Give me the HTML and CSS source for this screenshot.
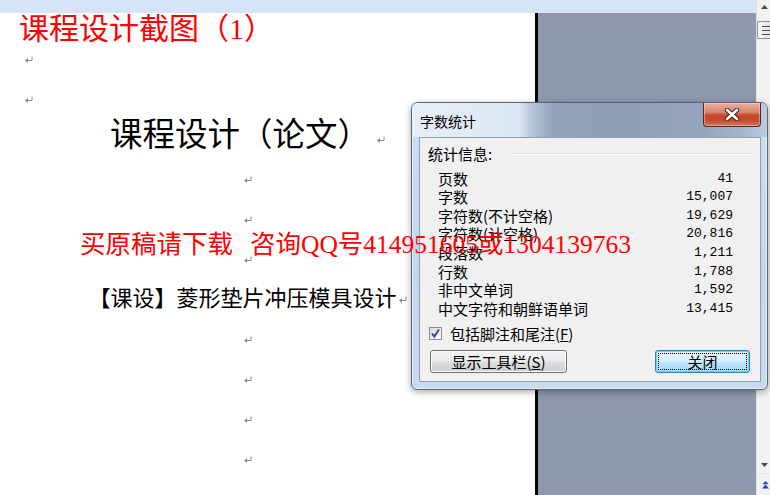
FILE: index.html
```html
<!DOCTYPE html>
<html lang="zh-CN">
<head>
<meta charset="utf-8">
<title>字数统计</title>
<link rel="stylesheet" href="styles.css">
</head>
<body>
<svg class="defs" aria-hidden="true">
  <symbol id="pm" viewBox="0 0 8 7">
    <path d="M7 0.5V4.5H2.5" fill="none" stroke="#8a8a8a" stroke-width="1"/>
    <path d="M0 4.5L3 2V7Z" fill="#8a8a8a"/>
  </symbol>
</svg>
<div class="screen">
  <div class="workspace">
    <div class="band"></div>
    <div class="area">
      <div class="page">
        <div class="doc-title">课程设计截图<span class="paren">（1）</span></div>
        <p class="line left"><svg class="pm"><use href="#pm"/></svg></p>
        <p class="line left"><svg class="pm"><use href="#pm"/></svg></p>
        <p class="line center"><span class="heading-text">课程设计（论文）</span><svg class="pm"><use href="#pm"/></svg></p>
        <p class="line center"><svg class="pm"><use href="#pm"/></svg></p>
        <p class="line center"><svg class="pm"><use href="#pm"/></svg></p>
        <p class="line center"><svg class="pm"><use href="#pm"/></svg></p>
        <p class="line center"><span class="sub-text">【课设】菱形垫片冲压模具设计</span><svg class="pm"><use href="#pm"/></svg></p>
        <p class="line center"><svg class="pm"><use href="#pm"/></svg></p>
        <p class="line center"><svg class="pm"><use href="#pm"/></svg></p>
        <p class="line center"><svg class="pm"><use href="#pm"/></svg></p>
        <p class="line center"><svg class="pm"><use href="#pm"/></svg></p>
      </div>
      <div class="outside"></div>
    </div>
  </div>
  <div class="scrollbar">
    <div class="sb-up"><svg width="7" height="4" viewBox="0 0 7 4"><path d="M3.5 0L7 4H0Z" fill="#4a4a4a"/></svg></div>
    <div class="sb-thumb"><i></i><i></i><i></i></div>
    <div class="sb-track"></div>
    <div class="sb-down"><svg width="7" height="4" viewBox="0 0 7 4"><path d="M0 0H7L3.5 4Z" fill="#4a4a4a"/></svg></div>
    <div class="sb-prev"><svg width="7" height="8" viewBox="0 0 7 8"><path d="M3.5 0L6.5 3.2H0.5Z M3.5 3.6L7 7.6H0Z" fill="#1f3fe0"/></svg></div>
  </div>

  <div class="dialog">
    <div class="titlebar">
      <span class="title">字数统计</span>
      <div class="close">
        <svg width="16" height="13" viewBox="0 0 16 13"><path d="M3 2L13 11M13 2L3 11" stroke="#4a1d14" stroke-width="4.6" stroke-linecap="round"/><path d="M3 2L13 11M13 2L3 11" stroke="#fff" stroke-width="2.6" stroke-linecap="round"/></svg>
      </div>
    </div>
    <div class="client">
      <div class="group-head"><span>统计信息:</span><span class="rule"></span></div>
      <div class="rows">
        <div class="row"><span>页数</span><span class="value">41</span></div>
        <div class="row"><span>字数</span><span class="value">15,007</span></div>
        <div class="row"><span>字符数(不计空格)</span><span class="value">19,629</span></div>
        <div class="row"><span>字符数(计空格)</span><span class="value">20,816</span></div>
        <div class="row"><span>段落数</span><span class="value">1,211</span></div>
        <div class="row"><span>行数</span><span class="value">1,788</span></div>
        <div class="row"><span>非中文单词</span><span class="value">1,592</span></div>
        <div class="row"><span>中文字符和朝鲜语单词</span><span class="value">13,415</span></div>
      </div>
      <div class="check-row">
        <span class="checkbox"><svg width="11" height="11" viewBox="0 0 11 11"><path d="M2 5.5L4.3 8.5L9 1.5" fill="none" stroke="#2d4a9a" stroke-width="2"/></svg></span>
        <span>包括脚注和尾注(<u>F</u>)</span>
      </div>
      <div class="buttons">
        <div class="btn">显示工具栏(<u>S</u>)</div>
        <div class="btn default"><span class="focus">关闭</span></div>
      </div>
    </div>
  </div>

  <div class="watermark"><span>买原稿请下载</span><span class="wm-2">咨询QQ号414951605或1304139763</span></div>
</div>
</body>
</html>
```

FILE: styles.css
```css
html, body {
  margin: 0;
  padding: 0;
}
body {
  width: 770px;
  height: 495px;
  overflow: hidden;
  background: #fff;
  font-family: "Noto Sans CJK SC", sans-serif;
  color: #000;
}
.defs {
  position: absolute;
  width: 0;
  height: 0;
  overflow: hidden;
}
.screen {
  position: relative;
  display: flex;
  width: 770px;
  height: 495px;
}
.workspace {
  width: 756px;
  flex: none;
  display: flex;
  flex-direction: column;
}
.band {
  height: 13px;
  flex: none;
  background: #d5e4f6;
}
.area {
  flex: 1;
  display: flex;
  min-height: 0;
}
.page {
  width: 535px;
  flex: none;
  box-sizing: border-box;
  padding-left: 22px;
  padding-right: 62px;
  background: #fff;
}
.outside {
  flex: 1;
  background: #9098ad;
  border-left: 3px solid #050505;
}
.doc-title {
  height: 26px;
  line-height: 26px;
  font-size: 30px;
  color: #f00;
  margin-left: -3px;
  white-space: nowrap;
}
.doc-title .paren {
  font-family: "Liberation Serif", "Noto Sans CJK SC", serif;
}
.line {
  height: 40px;
  margin: 0;
  display: flex;
  align-items: center;
}
.line.left {
  padding-left: 3px;
}
.line.center {
  justify-content: center;
}
.pm {
  width: 8px;
  height: 7px;
  flex: none;
}
.heading-text {
  font-size: 32.5px;
  line-height: 32px;
  margin-bottom: 14px;
  margin-right: 7px;
  white-space: nowrap;
}
.sub-text {
  font-size: 22px;
  line-height: 22px;
  margin-bottom: 6px;
  margin-right: 2px;
  white-space: nowrap;
}

/* scrollbar */
.scrollbar {
  width: 14px;
  flex: none;
  box-sizing: border-box;
  background: #f2f2f2;
  border-left: 1px solid #e2e2e2;
  display: flex;
  flex-direction: column;
}
.sb-up {
  height: 14px;
  display: flex;
  align-items: center;
  justify-content: center;
  padding-left: 2px;
}
.sb-thumb {
  margin-top: 7px;
  height: 18px;
  box-sizing: border-box;
  border: 1px solid #8f8f8f;
  border-right: none;
  border-radius: 2px 0 0 2px;
  background: linear-gradient(90deg, #f7f7f7, #e5e5e5);
  display: flex;
  flex-direction: column;
  align-items: flex-end;
  justify-content: center;
  gap: 3px;
}
.sb-thumb i {
  display: block;
  width: 8px;
  height: 1px;
  background: #4c4c4c;
}
.sb-track {
  flex: 1;
}
.sb-down {
  height: 16px;
  display: flex;
  align-items: center;
  justify-content: center;
  padding-left: 2px;
}
.sb-prev {
  height: 22px;
  display: flex;
  align-items: center;
  justify-content: center;
  padding-left: 3px;
  border-top: 1px solid #e6e6e6;
  box-sizing: border-box;
}

/* dialog */
.dialog {
  position: absolute;
  left: 411px;
  top: 102px;
  width: 357px;
  height: 288px;
  box-sizing: border-box;
  border: 1px solid #56677c;
  border-radius: 7px 7px 6px 6px;
  background: linear-gradient(180deg, #cfdff1 0%, #c2d6ed 60%, #c9dbef 100%);
  box-shadow: inset 0 0 0 1px rgba(255, 255, 255, 0.55), 0 2px 7px rgba(0, 0, 0, 0.35);
  display: flex;
  flex-direction: column;
  z-index: 1;
}
.titlebar {
  height: 34px;
  flex: none;
  display: flex;
  justify-content: space-between;
  align-items: flex-start;
  padding-left: 8px;
  border-radius: 6px 6px 0 0;
  background: linear-gradient(90deg, #e7eef7 0%, #dce7f3 30%, #b4c2d5 34%, #93a2ba 40%, #8f9fb8 60%, #95a5bd 82%, #a4b5cb 93%, #bccde2 100%);
}
.title {
  font-size: 14px;
  line-height: 14px;
  margin-top: 11px;
  color: #000;
}
.close {
  width: 58px;
  height: 24px;
  margin-right: 6px;
  box-sizing: border-box;
  border: 1px solid #5b2418;
  border-top: none;
  border-radius: 0 0 4px 4px;
  background: linear-gradient(180deg, #e9b1a2 0%, #d98671 40%, #c7472b 52%, #c24a2f 75%, #d2785c 100%);
  box-shadow: inset 0 0 0 1px rgba(255, 220, 210, 0.45);
  display: flex;
  align-items: center;
  justify-content: center;
}
.client {
  flex: 1;
  margin: 0 6px 7px 7px;
  border: 1px solid #8ea0b6;
  background: #f0f0f0;
  font-size: 15px;
}
.group-head {
  display: flex;
  align-items: center;
  height: 18.6px;
  line-height: 18.6px;
  margin-top: 7px;
  padding-left: 8px;
  padding-right: 8px;
}
.group-head .rule {
  flex: 1;
  height: 0;
  margin-left: 18px;
  border-top: 1px solid #d6dde3;
  border-bottom: 1px solid #fff;
}
.rows {
  margin-top: 6px;
  padding: 0 27px 0 18px;
}
.row {
  display: flex;
  justify-content: space-between;
  height: 18.6px;
  line-height: 18.6px;
  white-space: nowrap;
}
.value {
  font-family: "Liberation Mono", monospace;
  font-size: 13px;
}
.check-row {
  display: flex;
  align-items: center;
  height: 18.6px;
  margin-top: 5.4px;
  padding-left: 9px;
}
.checkbox {
  width: 13px;
  height: 13px;
  box-sizing: border-box;
  border: 1px solid #8e8f8f;
  background: linear-gradient(135deg, #dcdcdc, #fbfbfb);
  margin-right: 8px;
  display: flex;
  align-items: center;
  justify-content: center;
}
.checkbox svg {
  flex: none;
}
.buttons {
  display: flex;
  justify-content: space-between;
  margin-top: 7.7px;
  padding: 0 10px;
}
.btn {
  width: 137px;
  height: 23px;
  box-sizing: border-box;
  border: 1px solid #707070;
  border-radius: 3px;
  background: linear-gradient(180deg, #f2f2f2 0%, #ebebeb 48%, #dddddd 52%, #cfcfcf 100%);
  box-shadow: inset 0 0 0 1px #fbfbfb;
  display: flex;
  align-items: center;
  justify-content: center;
  line-height: 18px;
  white-space: nowrap;
}
.btn.default {
  width: 95px;
  border-color: #3c7fb1;
  box-shadow: inset 0 0 0 1px #56d8fa;
  background: linear-gradient(180deg, #eaf6fd 0%, #d9f0fc 48%, #bee6fd 52%, #a7d9f5 100%);
  align-items: stretch;
  padding: 2px;
}
.focus {
  flex: 1;
  border: 1px dotted #000;
  display: flex;
  align-items: center;
  justify-content: center;
  line-height: 15px;
}

/* watermark */
.watermark {
  position: absolute;
  left: 80px;
  top: 230px;
  font-family: "Liberation Serif", "Noto Sans CJK SC", serif;
  font-size: 25.5px;
  line-height: 30px;
  color: #f00;
  white-space: nowrap;
  z-index: 2;
}
.wm-2 {
  margin-left: 17px;
}
```
